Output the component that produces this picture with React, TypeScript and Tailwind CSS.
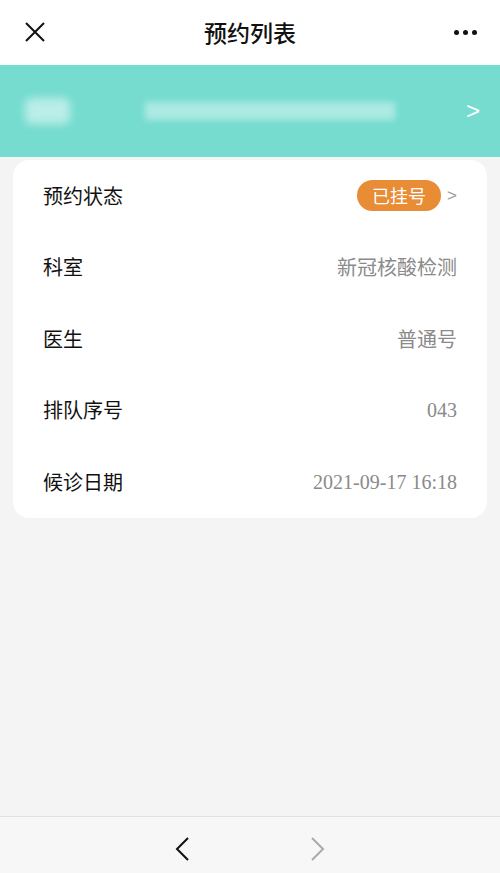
import React from "react";

const rows: { label: string; value: string; serif?: boolean }[] = [
	{ label: "科室", value: "新冠核酸检测" },
	{ label: "医生", value: "普通号" },
	{ label: "排队序号", value: "043", serif: true },
	{ label: "候诊日期", value: "2021-09-17 16:18", serif: true },
];

const sans = "font-['Noto_Sans_CJK_SC','Noto_Sans',sans-serif]";

export default function App() {
	return (
		<div className={`w-[500px] h-[873px] bg-[#f4f4f4] flex flex-col ${sans}`}>
			{/* top bar */}
			<div className="h-[65px] bg-white flex items-center justify-between px-[24px] relative">
				<svg width="22" height="22" viewBox="0 0 22 22" className="mt-[-2px]">
					<path d="M2 2 L20 20 M20 2 L2 20" stroke="#111" strokeWidth="2" />
				</svg>
				<span className="absolute left-0 right-0 text-center text-[23px] text-[#111] font-medium">预约列表</span>
				<div className="flex gap-[4px] mr-[-1px]">
					<span className="w-[5px] h-[5px] rounded-full bg-[#111]" />
					<span className="w-[5px] h-[5px] rounded-full bg-[#111]" />
					<span className="w-[5px] h-[5px] rounded-full bg-[#111]" />
				</div>
			</div>

			{/* patient banner */}
			<div className="h-[92px] bg-[#76dcd0] flex items-center pl-[25px] pr-[20px] overflow-hidden">
				<div className="w-[45px] h-[26px] bg-white/50 blur-[4px] rounded-[6px]" />
				<div className="ml-[75px] w-[250px] h-[18px] bg-white/40 blur-[3px]" />
				<span className="ml-auto text-white text-[24px] font-['Liberation_Sans',sans-serif] font-light">&gt;</span>
			</div>

			{/* info card */}
			<div className="mx-[13px] mt-[3px] bg-white rounded-[16px] flex flex-col">
				<div className="h-[71.5px] flex items-center justify-between pl-[30px] pr-[30px]">
					<span className="text-[20px] text-[#111]">预约状态</span>
					<div className="flex items-center">
						<span className="h-[31px] px-[15px] rounded-full bg-[#e88c35] text-white text-[18px] flex items-center">已挂号</span>
						<span className="ml-[6px] text-[#999] text-[17px] font-['Liberation_Sans',sans-serif]">&gt;</span>
					</div>
				</div>
				{rows.map((row, i) => (
					<div key={i} className="h-[71.5px] flex items-center justify-between pl-[30px] pr-[30px]">
						<span className="text-[20px] text-[#111]">{row.label}</span>
						<span
							className={
								row.serif
									? "text-[20px] text-[#8a8a8a] font-['Liberation_Serif',serif]"
									: "text-[20px] text-[#8a8a8a]"
							}>
							{row.value}
						</span>
					</div>
				))}
			</div>

			{/* bottom nav */}
			<div className="mt-auto h-[57px] bg-[#f7f7f7] border-t border-[#e2e2e2] flex items-center justify-center gap-[120px] pt-[8px]">
				<svg width="16" height="24" viewBox="0 0 16 24">
					<path d="M14 1 L3 12 L14 23" fill="none" stroke="#111" strokeWidth="2" />
				</svg>
				<svg width="16" height="24" viewBox="0 0 16 24">
					<path d="M2 1 L13 12 L2 23" fill="none" stroke="#aaa" strokeWidth="2" />
				</svg>
			</div>
		</div>
	);
}
